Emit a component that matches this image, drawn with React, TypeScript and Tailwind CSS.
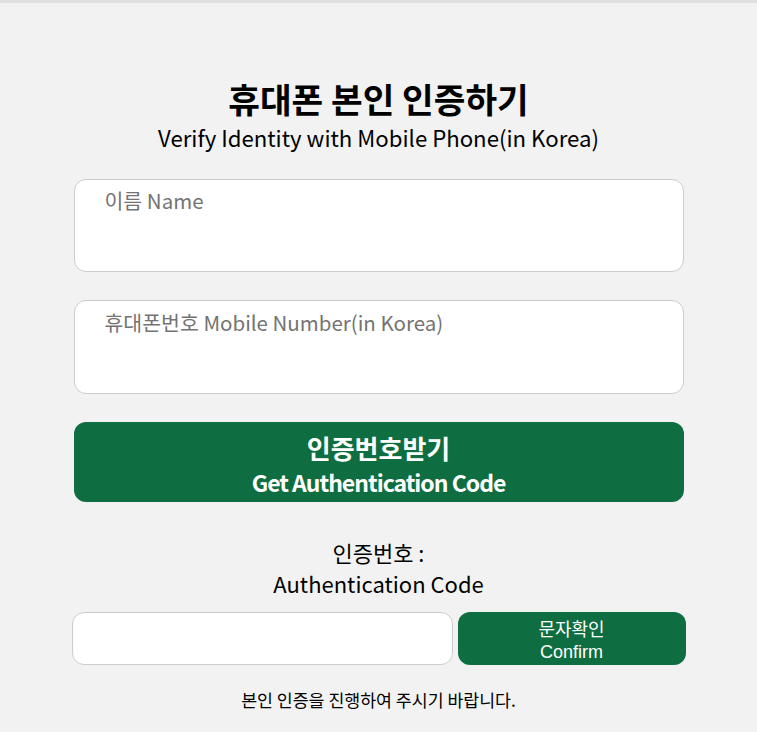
import React from 'react';

const App = () => {
  return (
    <div className="min-h-screen bg-[#f2f2f2] border-t-[3px] border-[#e0e0e0] text-black" style={{ fontFamily: '"Noto Sans CJK KR", "Noto Sans", sans-serif' }}>
      <div className="w-[610px] mx-auto pt-[76px] pb-4">
        <h1 className="text-[34.4px] leading-[38px] font-bold text-center">휴대폰 본인 인증하기</h1>
        <p className="text-[22.2px] leading-[30px] text-center mt-[5px]">Verify Identity with Mobile Phone(in Korea)</p>

        <textarea
          className="block w-full h-[93px] mt-[27px] rounded-[12px] border border-[#cccccc] bg-white pl-[30px] pt-[6px] text-[20.5px] leading-[28px] resize-none outline-none placeholder:text-[#737373]"
          placeholder="이름 Name"
        />
        <textarea
          className="block w-full h-[94px] mt-[28px] rounded-[12px] border border-[#cccccc] bg-white pl-[30px] pt-[7px] text-[20.5px] leading-[28px] resize-none outline-none placeholder:text-[#737373]"
          placeholder="휴대폰번호 Mobile Number(in Korea)"
        />

        <button className="flex flex-col items-center justify-center w-full h-[80px] mt-[28px] pt-[6px] rounded-[12px] bg-[#0e6e41] text-white font-bold">
          <span className="text-[26px] leading-[35px]">인증번호받기</span>
          <span className="text-[23px] leading-[35px] tracking-[-1px]">Get Authentication Code</span>
        </button>

        <div className="mt-[35px] text-center text-[22px] leading-[31px]">
          <div>인증번호 :</div>
          <div>Authentication Code</div>
        </div>

        <div className="flex gap-[5px] w-[614px] -ml-[2px] mt-[13px]">
          <input className="w-[381px] h-[53px] rounded-[12px] border border-[#cccccc] bg-white px-3 outline-none" />
          <button
            className="flex-1 h-[53px] pt-[5px] rounded-[12px] bg-[#0e6e41] text-white text-[18px] leading-[22px] flex flex-col items-center justify-center"
            style={{ fontFamily: '"Liberation Sans", "Noto Sans CJK KR", sans-serif' }}
          >
            <span>문자확인</span>
            <span>Confirm</span>
          </button>
        </div>

        <p className="mt-[23px] text-center text-[17.3px] leading-[24px]">본인 인증을 진행하여 주시기 바랍니다.</p>
      </div>
    </div>
  );
};

export default App;
